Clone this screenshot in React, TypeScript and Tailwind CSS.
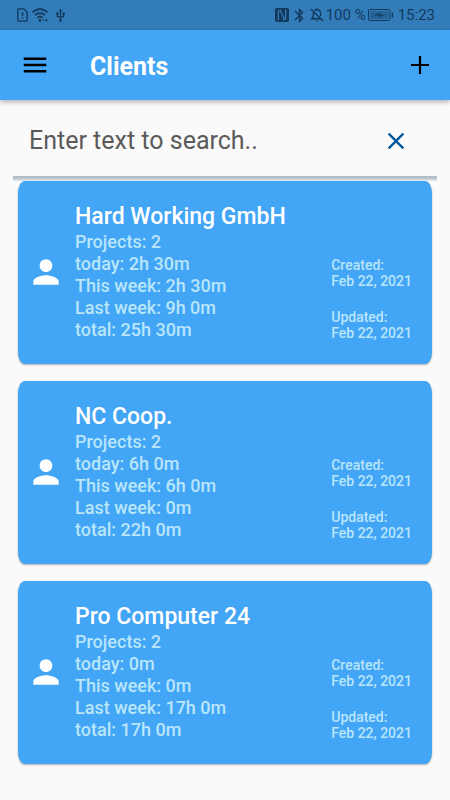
import { useState } from 'react';
import { MdBluetooth, MdClose, MdMenu, MdPerson, MdUsb } from 'react-icons/md';

const CLIENTS = [
  {
    name: 'Hard Working GmbH',
    stats: ['Projects: 2', 'today: 2h 30m', 'This week: 2h 30m', 'Last week: 9h 0m', 'total: 25h 30m'],
    created: 'Feb 22, 2021',
    updated: 'Feb 22, 2021',
  },
  {
    name: 'NC Coop.',
    stats: ['Projects: 2', 'today: 6h 0m', 'This week: 6h 0m', 'Last week: 0m', 'total: 22h 0m'],
    created: 'Feb 22, 2021',
    updated: 'Feb 22, 2021',
  },
  {
    name: 'Pro Computer 24',
    stats: ['Projects: 2', 'today: 0m', 'This week: 0m', 'Last week: 17h 0m', 'total: 17h 0m'],
    created: 'Feb 22, 2021',
    updated: 'Feb 22, 2021',
  },
];

type Client = (typeof CLIENTS)[number];

function SimAlertIcon() {
  return (
    <svg width="11" height="14" viewBox="0 0 11 14" fill="none" stroke="currentColor" strokeWidth="1.3">
      <path d="M1.7.8h5.1l3.4 3.4v8.1a.9.9 0 0 1-.9.9H1.7a.9.9 0 0 1-.9-.9V1.7a.9.9 0 0 1 .9-.9Z" />
      <path d="M5.5 4v4M5.5 9.3v1.5" strokeWidth="1.5" />
    </svg>
  );
}

function WifiIcon() {
  return (
    <svg width="17" height="14" viewBox="0 0 17 14" fill="none" stroke="currentColor" strokeWidth="1.6">
      <path d="M.6 4.4c4.2-4.4 10.6-4.4 14.8 0M3 7.2c2.9-2.8 7.1-2.8 10 0M5.4 9.8c1.6-1.5 3.6-1.5 5.2 0" />
      <circle cx="8" cy="12.4" r="1.3" fill="currentColor" stroke="none" />
      <path d="m10.8 12.6 1.1-1.6 1.1 1.6Zm3-2.1 2 1.8-2 1.6Z" fill="currentColor" stroke="none" />
    </svg>
  );
}

function NfcIcon() {
  return (
    <svg width="14" height="14" viewBox="0 0 14 14" fill="none">
      <rect width="14" height="14" rx="2" fill="currentColor" />
      <path d="M3.4 12.4V3.2L5 2l4 8.5V12l1.6-1.2V1.6" stroke="#327cb9" strokeWidth="1.2" />
    </svg>
  );
}

function BellOffIcon() {
  return (
    <svg width="14" height="14" viewBox="0 0 14 14" fill="none" stroke="currentColor" strokeWidth="1.4">
      <path d="M4.4 2.9C5 2.2 5.8 1.8 7 1.8c2.4 0 3.6 1.7 3.6 4v2.1M3.4 4.6v3.8L1.6 10.8h9M7 1.8V.3M.8 1l12.4 12" />
      <path d="M5.6 12.2a1.5 1.5 0 0 0 2.8 0Z" fill="currentColor" stroke="none" />
    </svg>
  );
}

function BatteryIcon() {
  return (
    <svg width="26" height="12" viewBox="0 0 26 12" fill="none">
      <rect x=".5" y=".5" width="21.5" height="11" rx="1.5" stroke="currentColor" />
      <rect x="2" y="2" width="18.5" height="8" fill="currentColor" opacity=".35" />
      <path d="M5.5 6.2 12 4v1.5L17.5 5.8 11 8V6.6Z" fill="currentColor" />
      <path d="M24.4 3.5v5" stroke="currentColor" strokeWidth="1.4" />
    </svg>
  );
}

function PlusIcon() {
  return (
    <svg width="28" height="28" viewBox="0 0 28 28" fill="none" stroke="currentColor" strokeWidth="2.2">
      <path d="M14 5v18M5 14h18" />
    </svg>
  );
}

function StatusBar() {
  return (
    <div className="flex h-[30px] items-center justify-between bg-[#327cb9] pr-[15px] pl-[17px] text-[#12395c]">
      <div className="flex items-center gap-1">
        <SimAlertIcon />
        <WifiIcon />
        <MdUsb size={15} />
      </div>
      <div className="flex items-center gap-0.5 text-[15px] leading-5">
        <NfcIcon />
        <MdBluetooth size={17} />
        <BellOffIcon />
        <span>100 %</span>
        <BatteryIcon />
        <span className="pl-0.5">15:23</span>
      </div>
    </div>
  );
}

function ClientCard({ client }: { client: Client }) {
  return (
    <li className="flex min-h-[183px] items-center rounded-[7px/12px] bg-[#42a5f5] pr-5 pb-0.5 pl-[9px] font-medium text-[#b9e6fb] shadow-[0_1px_2px_rgba(0,0,0,0.3)]">
      <MdPerson size={38} className="mr-2.5 shrink-0 text-white" />
      <div className="flex flex-1 items-end justify-between">
        <div>
          <h2 className="text-[23px] leading-7 text-white">{client.name}</h2>
          {client.stats.map((line) => (
            <p key={line} className="text-lg leading-[22px]">
              {line}
            </p>
          ))}
        </div>
        <dl className="shrink-0 text-sm leading-4">
          <dt>Created:</dt>
          <dd className="mb-5">{client.created}</dd>
          <dt>Updated:</dt>
          <dd>{client.updated}</dd>
        </dl>
      </div>
    </li>
  );
}

export default function App() {
  const [query, setQuery] = useState('');
  const visible = CLIENTS.filter((c) => c.name.toLowerCase().includes(query.toLowerCase()));

  return (
    <div className="min-h-screen bg-[#fafafa] font-[Roboto,sans-serif]">
      <StatusBar />
      <header className="flex h-[70px] items-center bg-[#42a5f5] pr-4 pl-5 shadow-[0_2px_5px_rgba(0,0,0,0.3)]">
        <button type="button" aria-label="Menu">
          <MdMenu size={30} />
        </button>
        <h1 className="flex-1 pt-1 pl-10 text-[25px] leading-8 font-bold text-white">Clients</h1>
        <button type="button" aria-label="Add client">
          <PlusIcon />
        </button>
      </header>

      <main>
        <div className="flex h-[76px] items-center pt-1.5 pr-10 pl-[29px]">
          <input
            type="text"
            aria-label="Search clients"
            placeholder="Enter text to search.."
            value={query}
            onChange={(e) => setQuery(e.target.value)}
            className="min-w-0 flex-1 text-[25px] leading-8 text-[#5a5a5a] outline-none placeholder:text-[#5a5a5a]"
          />
          <button type="button" aria-label="Clear search" onClick={() => setQuery('')} className="text-[#01579b]">
            <MdClose size={28} />
          </button>
        </div>
        <div className="mx-[13px] h-[5px] bg-linear-to-b from-[#a9b8c4] via-[#bcc7cf] to-[#e8edf0]" />

        <ul className="flex flex-col gap-[17px] px-[18px] pb-4">
          {visible.map((client) => (
            <ClientCard key={client.name} client={client} />
          ))}
        </ul>
      </main>
    </div>
  );
}
